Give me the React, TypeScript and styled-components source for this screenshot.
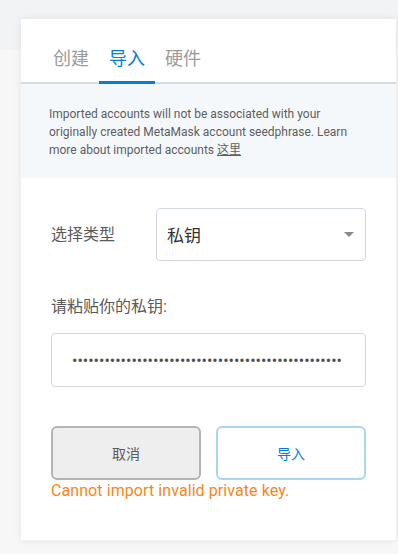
import React, { useEffect, useRef, useState } from "react";
import styled, { createGlobalStyle } from "styled-components";

const GlobalStyle = createGlobalStyle`
  html, body { margin: 0; padding: 0; }
  body {
    width: 398px;
    height: 554px;
    overflow: hidden;
    background: linear-gradient(#f2f3f4 0, #f2f3f4 50px, #f7f7f7 50px);
    font-family: Roboto, "Noto Sans CJK SC", sans-serif;
  }
  * { box-sizing: border-box; }
`;

const Page = styled.div`
  padding: 19px 0 0 21px;
`;

const Card = styled.div`
  width: 375px;
  height: 521px;
  background: #fff;
  box-shadow: 0 0 8px rgba(0, 0, 0, 0.08);
  display: flex;
  flex-direction: column;
`;

const TabBar = styled.div`
  height: 65px;
  display: flex;
  align-items: flex-end;
  padding-left: 22px;
  border-bottom: 2px solid #d9dcdf;
`;

const Tab = styled.button<{ $active?: boolean }>`
  all: unset;
  width: 56px;
  text-align: center;
  font-family: Roboto, "Noto Sans CJK SC", sans-serif;
  font-size: 18px;
  line-height: 24px;
  padding-bottom: 10px;
  margin-bottom: -2px;
  color: ${(p) => (p.$active ? "#037dd6" : "#9b9b9b")};
  border-bottom: 3px solid ${(p) => (p.$active ? "#037dd6" : "transparent")};
  cursor: pointer;
`;

const Notice = styled.div`
  background: #f4f8fb;
  padding: 21px 28px 19px;
  font-size: 12px;
  line-height: 18px;
  color: #5e5e5e;
`;

const Link = styled.a`
  color: #5e5e5e;
  text-decoration: underline;
  cursor: pointer;
`;

const Form = styled.div`
  padding: 30px 30px 0;
  display: flex;
  flex-direction: column;
`;

const SelectRow = styled.div`
  display: flex;
  align-items: center;
`;

const Label = styled.div`
  font-size: 16px;
  line-height: 22px;
  color: #5a5a5a;
`;

const RowLabel = styled(Label)`
  width: 105px;
  flex: none;
`;

const SelectBox = styled.div`
  flex: 1;
  height: 53px;
  border: 1px solid #d2d8dd;
  border-radius: 4px;
  display: flex;
  align-items: center;
  justify-content: space-between;
  padding: 0 11px 0 10px;
  font-size: 17px;
  color: #333;
`;

const Arrow = styled.span`
  width: 0;
  height: 0;
  border-left: 5px solid transparent;
  border-right: 5px solid transparent;
  border-top: 5px solid #8a8a8a;
`;

const KeyLabel = styled(Label)`
  margin-top: 35px;
`;

const KeyInput = styled.input`
  margin-top: 15px;
  height: 54px;
  width: 100%;
  border: 1px solid #d2d8dd;
  border-radius: 4px;
  padding: 0 20px;
  font-family: Roboto, sans-serif;
  font-size: 16px;
  color: #4d4d4d;
  caret-color: #333;
  outline: none;
  background: #fff;
`;

const ButtonRow = styled.div`
  margin-top: 39px;
  display: flex;
  gap: 15px;
`;

const Button = styled.button<{ $variant: "cancel" | "primary" }>`
  flex: 1;
  height: 54px;
  border-radius: 6px;
  border: 2px solid ${(p) => (p.$variant === "cancel" ? "#b4b4b4" : "#aad4f1")};
  background: ${(p) => (p.$variant === "cancel" ? "#eeeeee" : "#ffffff")};
  color: ${(p) => (p.$variant === "cancel" ? "#5b5b5b" : "#037dd6")};
  font-family: Roboto, "Noto Sans CJK SC", sans-serif;
  font-size: 14px;
  cursor: pointer;
`;

const ErrorText = styled.div`
  margin-top: 1px;
  font-size: 16px;
  line-height: 20px;
  letter-spacing: 0.08px;
  color: #f7861c;
`;

export default function App() {
  const [tab, setTab] = useState(1);
  const inputRef = useRef<HTMLInputElement>(null);
  useEffect(() => {
    const el = inputRef.current;
    if (el) {
      el.focus();
      const n = el.value.length;
      el.setSelectionRange(n, n);
    }
  }, []);
  const tabs = ["创建", "导入", "硬件"];
  return (
    <>
      <GlobalStyle />
      <Page>
        <Card>
          <TabBar>
            {tabs.map((t, i) => (
              <Tab key={t} $active={i === tab} onClick={() => setTab(i)}>
                {t}
              </Tab>
            ))}
          </TabBar>
          <Notice>
            Imported accounts will not be associated with your originally created MetaMask account
            seedphrase. Learn more about imported accounts <Link>这里</Link>
          </Notice>
          <Form>
            <SelectRow>
              <RowLabel>选择类型</RowLabel>
              <SelectBox>
                <span>私钥</span>
                <Arrow />
              </SelectBox>
            </SelectRow>
            <KeyLabel>请粘贴你的私钥:</KeyLabel>
            <KeyInput ref={inputRef} type="password" defaultValue={"a".repeat(50)} />
            <ButtonRow>
              <Button $variant="cancel">取消</Button>
              <Button $variant="primary">导入</Button>
            </ButtonRow>
            <ErrorText>Cannot import invalid private key.</ErrorText>
          </Form>
        </Card>
      </Page>
    </>
  );
}
